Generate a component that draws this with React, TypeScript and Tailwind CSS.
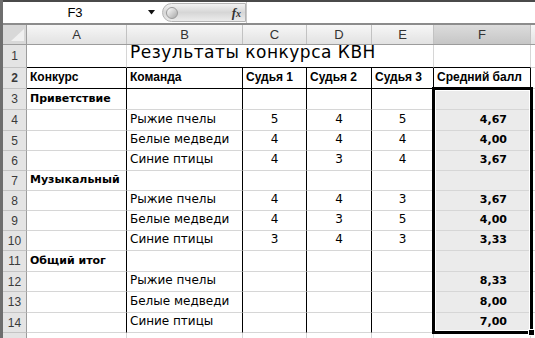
import React from "react"

type Row = {
  n: number
  h: string
  a?: string
  b?: string
  c?: string
  d?: string
  e?: string
  f?: string
}

const rows: Row[] = [
  { n: 3, h: "h-[21px]", a: "Приветствие" },
  { n: 4, h: "h-[21px]", b: "Рыжие пчелы", c: "5", d: "4", e: "5", f: "4,67" },
  { n: 5, h: "h-[20px]", b: "Белые медведи", c: "4", d: "4", e: "4", f: "4,00" },
  { n: 6, h: "h-[20px]", b: "Синие птицы", c: "4", d: "3", e: "4", f: "3,67" },
  { n: 7, h: "h-[20px]", a: "Музыкальный" },
  { n: 8, h: "h-[20px]", b: "Рыжие пчелы", c: "4", d: "4", e: "3", f: "3,67" },
  { n: 9, h: "h-[20px]", b: "Белые медведи", c: "4", d: "3", e: "5", f: "4,00" },
  { n: 10, h: "h-[20px]", b: "Синие птицы", c: "3", d: "4", e: "3", f: "3,33" },
  { n: 11, h: "h-[21px]", a: "Общий итог" },
  { n: 12, h: "h-[20px]", b: "Рыжие пчелы", f: "8,33" },
  { n: 13, h: "h-[21px]", b: "Белые медведи", f: "8,00" },
  { n: 14, h: "h-[20px]", b: "Синие птицы", f: "7,00" },
]

const font = "font-['DejaVu_Sans',sans-serif]"

function RowHead({ n }: { n: number | string }) {
  return (
    <div className="w-[24px] shrink-0 h-full flex items-center justify-center bg-[#e4e4e4] border-r border-b border-r-[#9c9c9c] border-b-[#c4c4c4] text-[12px] text-[#3a3a3a] font-['Liberation_Sans',sans-serif]">
      {n}
    </div>
  )
}

function FormulaBar() {
  return (
    <div className="h-[25px] shrink-0 flex flex-col border-t-2 border-t-[#4a4a4a] border-b-2 border-b-[#8c8c8c] bg-white">
      <div className="flex-1 flex items-center">
        <div className="w-[144px] text-center text-[13px] text-black font-['Liberation_Sans',sans-serif]">
          F3
        </div>
        <svg width="8" height="5" viewBox="0 0 8 5" className="ml-[1px]">
          <path d="M0 0H7L3.5 4.5Z" fill="#111" />
        </svg>
        <div className="ml-[6px] w-[84px] h-[19px] rounded-l-full bg-gradient-to-b from-[#f2f2f2] via-[#d6d6d6] to-[#ececec] border border-[#b4b4b4] flex items-center pl-[3px] pr-[4px]">
          <div className="w-[12px] h-[12px] rounded-full bg-gradient-to-br from-[#ffffff] to-[#a8a8a8] border border-[#9a9a9a]" />
          <span className="ml-auto italic font-['Liberation_Serif',serif] text-[13px] font-bold text-[#333] leading-none">
            f<span className="text-[10px]">x</span>
          </span>
        </div>
        <div className="flex-1 h-full border-l border-[#c8c8c8]" />
      </div>
    </div>
  )
}

function ColHeader() {
  const cell =
    "h-full flex items-center justify-center border-r border-r-[#c2c2c2] text-[13px] text-[#333] font-['Liberation_Sans',sans-serif]"
  return (
    <div className="h-[20px] shrink-0 flex bg-gradient-to-b from-[#f7f7f7] to-[#e2e2e2] border-b border-b-[#9c9c9c]">
      <div className="w-[24px] shrink-0 h-full border-r border-r-[#9c9c9c] bg-[#d8d8d8] relative overflow-hidden">
        <svg width="24" height="19" className="absolute inset-0">
          <path d="M21 4V16H8Z" fill="#f0f0f0" />
        </svg>
      </div>
      <div className={`${cell} w-[100px]`}>A</div>
      <div className={`${cell} w-[116px]`}>B</div>
      <div className={`${cell} w-[64px]`}>C</div>
      <div className={`${cell} w-[65px]`}>D</div>
      <div className={`${cell} w-[62px]`}>E</div>
      <div className={`${cell} w-[97px] bg-gradient-to-b from-[#dcdcdc] to-[#c6c6c6]`}>F</div>
      <div className="flex-1" />
    </div>
  )
}

export default function App() {
  const g = "border-b border-b-[#d6d6d6]"
  return (
    <div className={`w-[535px] h-[338px] overflow-hidden bg-white flex flex-col border-l-[3px] border-l-[#6e6e6e] ${font}`}>
      <FormulaBar />
      <ColHeader />

      {/* row 1 */}
      <div className="h-[23px] shrink-0 flex">
        <RowHead n={1} />
        <div className="w-[100px] shrink-0 border-r border-r-[#d6d6d6] border-b border-b-black" />
        <div className="w-[307px] shrink-0 border-r border-r-[#d6d6d6] border-b border-b-black flex items-end pl-[3px] pb-[2px] text-[17px] tracking-[0.5px] text-black whitespace-nowrap">
          Результаты конкурса КВН
        </div>
        <div className="w-[97px] shrink-0 border-r border-r-[#d6d6d6] border-b border-b-black" />
        <div className={`flex-1 ${g}`} />
      </div>

      {/* row 2 */}
      <div className="h-[21px] shrink-0 flex font-['Liberation_Sans',sans-serif] font-bold text-[12px] text-black">
        <RowHead n={2} />
        <div className="w-[100px] shrink-0 border-r border-b border-black flex items-end pl-[3px] pb-[2px]">Конкурс</div>
        <div className="w-[116px] shrink-0 border-r border-b border-black flex items-end pl-[3px] pb-[2px]">Команда</div>
        <div className="w-[64px] shrink-0 border-r border-b border-black flex items-end pl-[3px] pb-[2px]">Судья 1</div>
        <div className="w-[65px] shrink-0 border-r border-b border-black flex items-end pl-[3px] pb-[2px]">Судья 2</div>
        <div className="w-[62px] shrink-0 border-r border-b border-black flex items-end pl-[3px] pb-[2px]">Судья 3</div>
        <div className="w-[97px] shrink-0 border-r border-b border-black flex items-end pl-[3px] pb-[2px] whitespace-nowrap">Средний балл</div>
        <div className={`flex-1 ${g}`} />
      </div>

      <div className="relative flex flex-col">
        {rows.map((r) => (
          <div key={r.n} className={`${r.h} shrink-0 flex text-[12px] text-black`}>
            <RowHead n={r.n} />
            <div className={`w-[100px] shrink-0 border-r border-r-black ${g} flex items-end pl-[3px] pb-[2px] font-bold text-[11px] whitespace-nowrap`}>
              {r.a}
            </div>
            <div className={`w-[116px] shrink-0 border-r border-r-black ${g} flex items-end pl-[3px] pb-[2px] whitespace-nowrap`}>
              {r.b}
            </div>
            <div className={`w-[64px] shrink-0 border-r border-r-black ${g} flex items-end justify-center pb-[2px]`}>{r.c}</div>
            <div className={`w-[65px] shrink-0 border-r border-r-black ${g} flex items-end justify-center pb-[2px]`}>{r.d}</div>
            <div className={`w-[62px] shrink-0 border-r border-r-black ${g} flex items-end justify-center pb-[2px]`}>{r.e}</div>
            <div className={`w-[97px] shrink-0 bg-[#ebebeb] ${g} flex items-end justify-end pr-[24px] pb-[2px] font-bold text-[11px]`}>
              {r.f}
            </div>
            <div className={`flex-1 ${g}`} />
          </div>
        ))}
        {/* selection F3:F14 */}
        <div className="absolute left-[429px] top-[-2px] w-[101px] h-[247px] border-[3px] border-black pointer-events-none">
          <div className="w-full h-full border border-white" />
          <div className="absolute right-[-5px] bottom-[-5px] w-[7px] h-[7px] bg-black border border-white" />
        </div>
      </div>
      <div className="flex-1 flex">
        <div className="w-[24px] shrink-0 bg-[#e4e4e4] border-r border-r-[#9c9c9c]" />
        <div className="w-[100px] shrink-0 border-r border-r-[#d6d6d6]" />
        <div className="w-[116px] shrink-0 border-r border-r-[#d6d6d6]" />
        <div className="w-[64px] shrink-0 border-r border-r-[#d6d6d6]" />
        <div className="w-[65px] shrink-0 border-r border-r-[#d6d6d6]" />
        <div className="w-[62px] shrink-0 border-r border-r-[#d6d6d6]" />
        <div className="w-[97px] shrink-0 border-r border-r-[#d6d6d6]" />
      </div>
    </div>
  )
}
